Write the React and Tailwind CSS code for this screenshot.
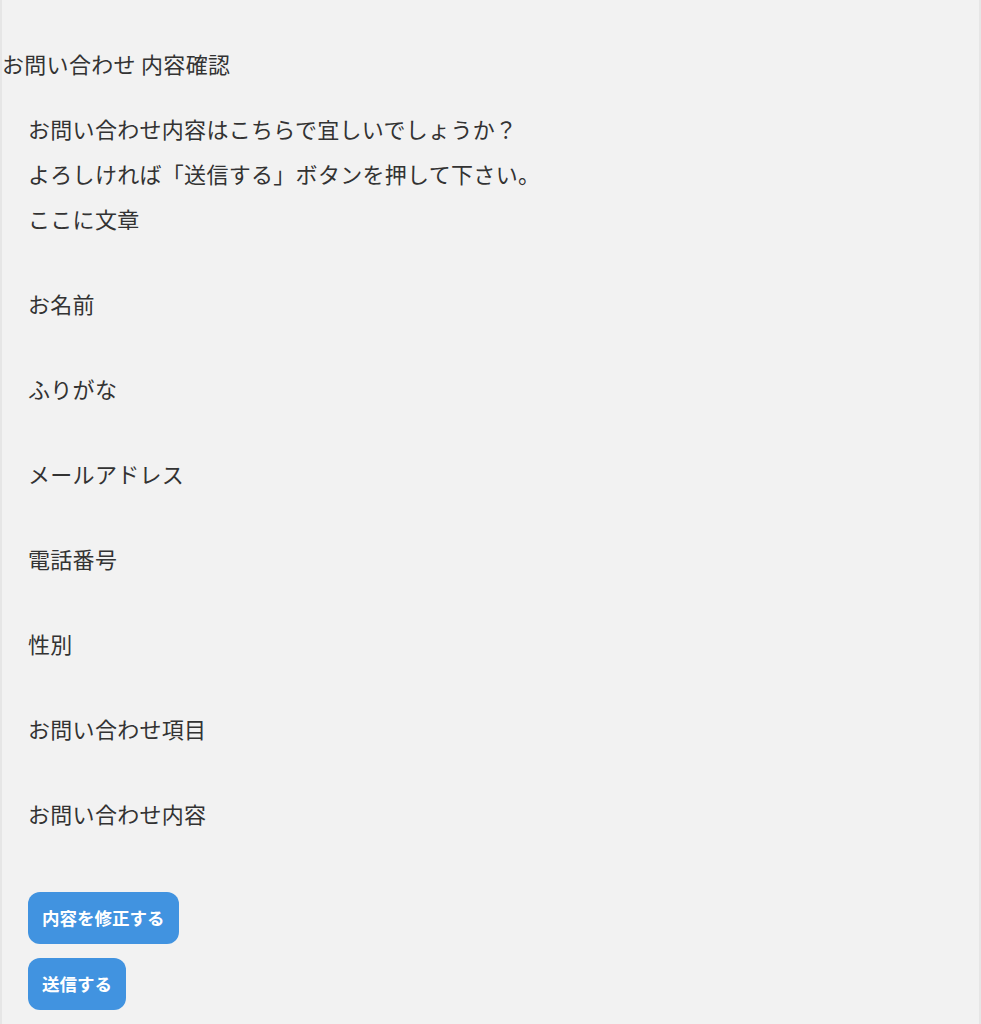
import React from 'react';

const fields = [
  'お名前',
  'ふりがな',
  'メールアドレス',
  '電話番号',
  '性別',
  'お問い合わせ項目',
  'お問い合わせ内容',
];

export default function App() {
  return (
    <div
      className="min-h-screen bg-[#f2f2f2] border-l-2 border-r-2 border-[#e6e6e6] text-[#333333] pt-[41px] pb-[20px] tracking-[0.3px]"
      style={{ fontFamily: '"Noto Sans CJK JP", "Noto Sans", sans-serif' }}
    >
      <h1 className="text-[22px] leading-[44px] font-normal">お問い合わせ 内容確認</h1>

      <div className="ml-[26px] mt-[21px]">
        <p className="text-[22px] leading-[45px]">お問い合わせ内容はこちらで宜しいでしょうか？</p>
        <p className="text-[22px] leading-[45px]">よろしければ「送信する」ボタンを押して下さい。</p>
        <p className="text-[22px] leading-[45px]">ここに文章</p>

        {/* Confirmation fields (values empty) */}
        <dl className="mt-[40px] flex flex-col gap-[40px]">
          {fields.map((label) => (
            <div key={label}>
              <dt className="text-[22px] leading-[45px]">{label}</dt>
              <dd></dd>
            </div>
          ))}
        </dl>

        <div className="mt-[56px] flex flex-col items-start gap-[14px] tracking-normal">
          <button className="h-[52px] px-[14px] rounded-[12px] bg-[#4193e0] text-white text-[17.5px] font-bold">
            内容を修正する
          </button>
          <button className="h-[52px] px-[14px] rounded-[12px] bg-[#4193e0] text-white text-[17.5px] font-bold">
            送信する
          </button>
        </div>
      </div>
    </div>
  );
}
